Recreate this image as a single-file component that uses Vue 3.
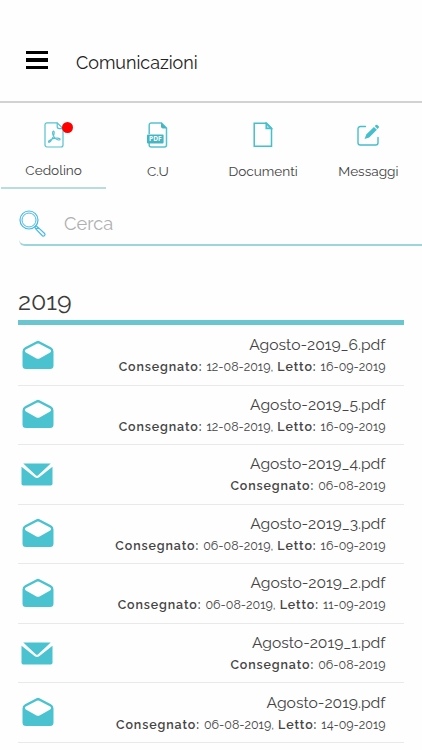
<script setup>
import { ref } from 'vue';

const tabs = [
  { id: 'cedolino', label: 'Cedolino', badge: true },
  { id: 'cu', label: 'C.U' },
  { id: 'documenti', label: 'Documenti' },
  { id: 'messaggi', label: 'Messaggi' },
];
const activeTab = ref('cedolino');
const search = ref('');

const documents = [
  { name: 'Agosto-2019_6.pdf', delivered: '12-08-2019', read: '16-09-2019' },
  { name: 'Agosto-2019_5.pdf', delivered: '12-08-2019', read: '16-09-2019' },
  { name: 'Agosto-2019_4.pdf', delivered: '06-08-2019' },
  { name: 'Agosto-2019_3.pdf', delivered: '06-08-2019', read: '16-09-2019' },
  { name: 'Agosto-2019_2.pdf', delivered: '06-08-2019', read: '11-09-2019' },
  { name: 'Agosto-2019_1.pdf', delivered: '06-08-2019' },
  { name: 'Agosto-2019.pdf', delivered: '06-08-2019', read: '14-09-2019' },
];
</script>

<template>
  <div class="page">
    <header class="header">
      <button class="menu" aria-label="Menu">
        <span class="bar"></span>
        <span class="bar"></span>
        <span class="bar"></span>
      </button>
      <h1 class="title">Comunicazioni</h1>
    </header>

    <nav class="tabs">
      <button
        v-for="tab in tabs"
        :key="tab.id"
        class="tab"
        :class="[tab.id, { active: tab.id === activeTab }]"
        @click="activeTab = tab.id"
      >
        <span class="tab-icon">
          <svg v-if="tab.id === 'cedolino'" width="20" height="26" viewBox="0 0 20 26" fill="none" stroke="#55c2cf" stroke-width="1.2">
            <path d="M3 .8h10.2L19 6.6V23a2 2 0 0 1-2 2H3a2 2 0 0 1-2-2V2.8a2 2 0 0 1 2-2z" />
            <path d="M13.2.8v3.8a2 2 0 0 0 2 2H19" />
            <path d="M9.3 9.2c-1.4.5-.7 3.8 1 6.1 1.7 2.2 5.5 3.5 5.8 2.1.3-1.5-4.1-1.8-7-.8-2.8 1-5.3 2.7-4.5 3.6 1.1 1.1 3.7-3.2 4.9-6.3.9-2.5 1-4.9-.2-4.7z" />
          </svg>
          <svg v-else-if="tab.id === 'cu'" width="21" height="26" viewBox="0 0 21 26">
            <path d="M2.2 12V3a2 2 0 0 1 2-2h10.3l5 5v17a2 2 0 0 1-2 2H4.2a2 2 0 0 1-2-2v-2" fill="none" stroke="#55c2cf" stroke-width="1.5" />
            <path d="M14 .6 20 6.5h-4a2 2 0 0 1-2-2z" fill="#45b5c2" />
            <rect x="0" y="12.5" width="16.6" height="9" rx="1" fill="#45b5c2" />
            <text x="8.3" y="19.4" class="pdf-label">PDF</text>
          </svg>
          <svg v-else-if="tab.id === 'documenti'" width="20" height="26" viewBox="0 0 20 26" fill="none" stroke="#45bfcb" stroke-width="1.5">
            <path d="M1.2 1.2h12.3l5 5.2v17.8H1.2z" />
            <path d="M13.2 1.2v5.4h5.3z" fill="#a9e0e6" />
          </svg>
          <svg v-else width="22" height="23" viewBox="0 0 22 23">
            <path d="M8.5 2.5H3.3A2.3 2.3 0 0 0 1 4.8v13.9A2.3 2.3 0 0 0 3.3 21h15.4a2.3 2.3 0 0 0 2.3-2.3v-5.2" fill="none" stroke="#45bfcb" stroke-width="1.4" stroke-linecap="round" />
            <path d="M7.6 15 9.2 10.4 16.9 2.9 19.9 5.8 12.2 13.4zM17.7 2.1 18.9 1q.7-.6 1.4 0l1.4 1.3q.6.7 0 1.4l-1.1 1.2z" fill="#45bfcb" />
          </svg>
          <span v-if="tab.badge" class="badge"></span>
        </span>
        <span class="tab-label">{{ tab.label }}</span>
      </button>
    </nav>

    <label class="search">
      <svg class="search-icon" width="28" height="28" viewBox="0 0 28 28" fill="none" stroke="#48b9e8">
        <circle cx="10" cy="10" r="9" stroke-width="1.2" />
        <circle cx="10" cy="10" r="7" stroke-width="1" />
        <path d="m15.8 17 1.3-1.3 2 1.7 6.5 6.1c1.3 1.3-.8 3.5-2.2 2.2l-6.2-6.4zM17 19.5l2.2-2.2" stroke-width="1.2" />
      </svg>
      <input v-model="search" class="search-input" type="text" placeholder="Cerca" />
    </label>

    <section class="documents">
      <h2 class="year">2019</h2>
      <ul class="list">
        <li v-for="doc in documents" :key="doc.name" class="document">
          <svg v-if="doc.read" class="envelope" width="32" height="30" viewBox="0 0 32 30">
            <path
              d="M14.5 1.2Q16 .4 17.5 1.2L29 7.3Q31.5 8.7 31.5 11.5V25.5Q31.5 29 28 29H4Q.5 29 .5 25.5V11.5Q.5 8.7 3 7.3zM14.8 3.8 3.8 9.6Q1.9 10.9 3.8 12.5L14 18.2Q16 19.3 18 18.2L28.2 12.5Q30.1 10.9 28.2 9.6L17.2 3.8Q16 3.2 14.8 3.8z"
              fill="#4bc2cf"
              fill-rule="evenodd"
            />
          </svg>
          <svg v-else class="envelope closed" width="32" height="23" viewBox="0 0 32 23">
            <path d="M2.3.5h27.4L17.2 12.2q-1.2 1.1-2.4 0z" fill="#4bc2cf" />
            <path d="M.5 3.7 13.8 14.2q2.200 1.600 4.400 0L31.500 3.700v17q0 1.800-1.800 1.800H2.300q-1.800 0-1.800-1.800z" fill="#4bc2cf" />
          </svg>
          <div class="details">
            <div class="name">{{ doc.name }}</div>
            <div class="dates">
              <b>Consegnato:</b> {{ doc.delivered }}<template v-if="doc.read">, <b>Letto:</b> {{ doc.read }}</template>
            </div>
          </div>
        </li>
      </ul>
    </section>
  </div>
</template>

<style>
body {
  margin: 0;
  background: #fefefe;
}
</style>

<style scoped>
.page {
  box-sizing: border-box;
  height: 750px;
  overflow: hidden;
  color: #444;
  background: #fefefe;
  font-family: Raleway, Lato, sans-serif;
}

button {
  padding: 0;
  border: 0;
  background: none;
  color: inherit;
  font: inherit;
}

.header {
  box-sizing: border-box;
  display: flex;
  align-items: center;
  height: 103px;
  padding: 22px 0 0 26px;
  border-bottom: 2px solid #d2d2d2;
}

.menu {
  display: flex;
  flex-direction: column;
  gap: 4px;
  width: 22px;
  margin-top: -3px;
}

.bar {
  height: 3.5px;
  background: #000;
}

.title {
  margin: 2px 0 0 28px;
  color: #222;
  font-size: 17.9px;
  font-weight: 400;
  line-height: 24px;
}

.tabs {
  display: flex;
  height: 86px;
  margin-right: 1px;
}

.tab {
  box-sizing: border-box;
  display: flex;
  flex: 1;
  flex-direction: column;
  align-items: center;
  padding-top: 19px;
}

.tab.cedolino {
  margin: 0 -1px 0 1px;
}

.tab.active {
  border-bottom: 2px solid #b9dcdc;
}

.tab-icon {
  position: relative;
  display: flex;
  align-items: center;
  height: 26px;
}

.badge {
  position: absolute;
  top: 0;
  right: -9px;
  width: 11px;
  height: 11px;
  border-radius: 50%;
  background: #f00;
}

.tab-label {
  margin-top: 14px;
  font-size: 13.6px;
  line-height: 18px;
}

.tab.active .tab-label {
  margin-top: 13px;
}

.pdf-label {
  fill: #fff;
  font-family: "Open Sans", sans-serif;
  font-size: 6.5px;
  font-weight: 700;
  text-anchor: middle;
}

.search {
  box-sizing: border-box;
  display: flex;
  align-items: center;
  height: 42px;
  margin: 15px -10px 0 19px;
  border-bottom: 2px solid #9dd5dc;
  border-radius: 6px;
}

.search-icon {
  margin-top: -1px;
}

.search-input {
  width: 300px;
  margin: -2px 0 0 17px;
  padding: 0;
  border: 0;
  outline: 0;
  background: none;
  font-family: inherit;
  font-size: 18.2px;
}

.search-input::placeholder {
  color: #b0b0b0;
}

.documents {
  margin: 41px 18px 0;
}

.year {
  margin: 0;
  padding-bottom: 5px;
  border-bottom: 5px solid #69c5cf;
  color: #3c3c3c;
  font-size: 25px;
  font-weight: 400;
  line-height: 28px;
}

.list {
  margin: 0;
  padding: 1px 0 0;
  list-style: none;
}

.document {
  box-sizing: border-box;
  display: flex;
  align-items: center;
  justify-content: space-between;
  height: 59.55px;
  padding: 0 18.5px 0 4px;
  border-bottom: 1px solid #e9e9e9;
}

.envelope {
  flex: none;
  margin-top: -1px;
}

.closed {
  margin: 1px 0 0 -1px;
}

.details {
  padding-top: 1px;
  text-align: right;
}

.name {
  font-size: 15.65px;
  line-height: 22px;
}

.dates {
  font-size: 12.45px;
  line-height: 21px;
  word-spacing: 0.9px;
}

.dates b {
  font-weight: 600;
  letter-spacing: 0.9px;
}
</style>
